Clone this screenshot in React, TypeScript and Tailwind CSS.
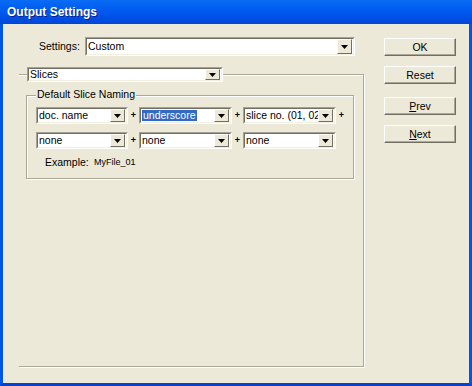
import React from "react";

const Arrow = () => (
  <svg width="7" height="4" viewBox="0 0 7 4" className="block">
    <path d="M0 0h7L3.5 4z" fill="#000" />
  </svg>
);

const Combo = ({
  value,
  width,
  height = 17,
  selected = false,
}: {
  value: string;
  width: string;
  height?: number;
  selected?: boolean;
}) => (
  <div
    className={`${width} shrink-0 flex border border-t-[#a5a293] border-l-[#a5a293] border-r-white border-b-white bg-white`}
    style={{ height }}
  >
    <div className="flex flex-1 min-w-0 border border-t-[#716f64] border-l-[#716f64] border-r-[#f1efe2] border-b-[#f1efe2] bg-white">
      <div className="flex-1 min-w-0 flex items-center overflow-hidden whitespace-nowrap pl-[1px] leading-none">
        <span className={selected ? "bg-[#316ac5] text-white px-[1px]" : ""}>{value}</span>
      </div>
      <div className="w-[15px] shrink-0 flex items-center justify-center border border-t-white border-l-white border-r-[#716f64] border-b-[#716f64] bg-[#ece9d8] pt-[1px] mr-[1px]">
        <Arrow />
      </div>
    </div>
  </div>
);

const Plus = () => <span className="w-[11px] text-center text-[9px] font-bold leading-none pt-[4px]">+</span>;

const Button = ({ children }: { children: React.ReactNode }) => (
  <div className="w-[72px] h-[18px] flex items-center justify-center border border-t-white border-l-white border-r-[#716f64] border-b-[#716f64] shadow-[inset_-1px_-1px_0_#aca899] bg-[#ece9d8] text-[10.5px] leading-none">
    {children}
  </div>
);

export default function App() {
  return (
    <div
      className="w-[472px] h-[386px] flex flex-col text-black"
      style={{ fontFamily: '"Liberation Sans", Arial, sans-serif' }}
    >
      <div className="h-[24px] flex items-center pl-[7px] bg-gradient-to-b from-[#0a6cf5] via-[#0058ee] to-[#0046d8]">
        <span className="text-white font-bold text-[12px] [text-shadow:1px_1px_0_#0a1e8c]">
          Output Settings
        </span>
      </div>
      <div className="flex-1 flex bg-[#ece9d8] border-x-[3px] border-b-[3px] border-x-[#0055e5] border-b-[#0840d0] text-[10.5px]">
        <div className="flex flex-col pl-[16px] pt-[13px]">
          <div className="flex items-center h-[19px] pl-[20px]">
            <span className="w-[46px]">Settings:</span>
            <Combo value="Custom" width="w-[270px]" height={19} />
          </div>
          <div className="mt-[18px] w-[345px] h-[293px] border border-l-0 border-[#aca899] shadow-[inset_0_1px_0_#fff,1px_1px_0_#fff] flex flex-col">
            <div className="-mt-[8px] ml-[8px] w-[196px] h-[15px] flex">
              <Combo value="Slices" width="w-[196px]" height={15} />
            </div>
            <div className="mt-[13px] ml-[7px] w-[328px] h-[84px] border border-[#aca899] shadow-[inset_1px_1px_0_#fff,1px_1px_0_#fff] flex flex-col">
              <div className="-mt-[7px] ml-[9px] self-start px-[1px] bg-[#ece9d8] leading-none h-[12px]">
                Default Slice Naming
              </div>
              <div className="flex mt-[6px] ml-[9px] h-[17px]">
                <Combo value="doc. name" width="w-[92px]" />
                <Plus />
                <Combo value="underscore" width="w-[93px]" selected />
                <Plus />
                <Combo value="slice no. (01, 02...)" width="w-[93px]" />
                <Plus />
              </div>
              <div className="flex mt-[8px] ml-[9px] h-[17px]">
                <Combo value="none" width="w-[92px]" />
                <Plus />
                <Combo value="none" width="w-[93px]" />
                <Plus />
                <Combo value="none" width="w-[93px]" />
              </div>
              <div className="flex items-center mt-[8px] ml-[18px] h-[12px]">
                <span className="w-[49px]">Example:</span>
                <span className="text-[9px]">MyFile_01</span>
              </div>
            </div>
          </div>
        </div>
        <div className="flex flex-col ml-[20px] pt-[14px]">
          <Button>OK</Button>
          <div className="mt-[10px]">
            <Button>Reset</Button>
          </div>
          <div className="mt-[13px]">
            <Button>
              <span className="underline">P</span>rev
            </Button>
          </div>
          <div className="mt-[10px]">
            <Button>
              <span className="underline">N</span>ext
            </Button>
          </div>
        </div>
      </div>
    </div>
  );
}
